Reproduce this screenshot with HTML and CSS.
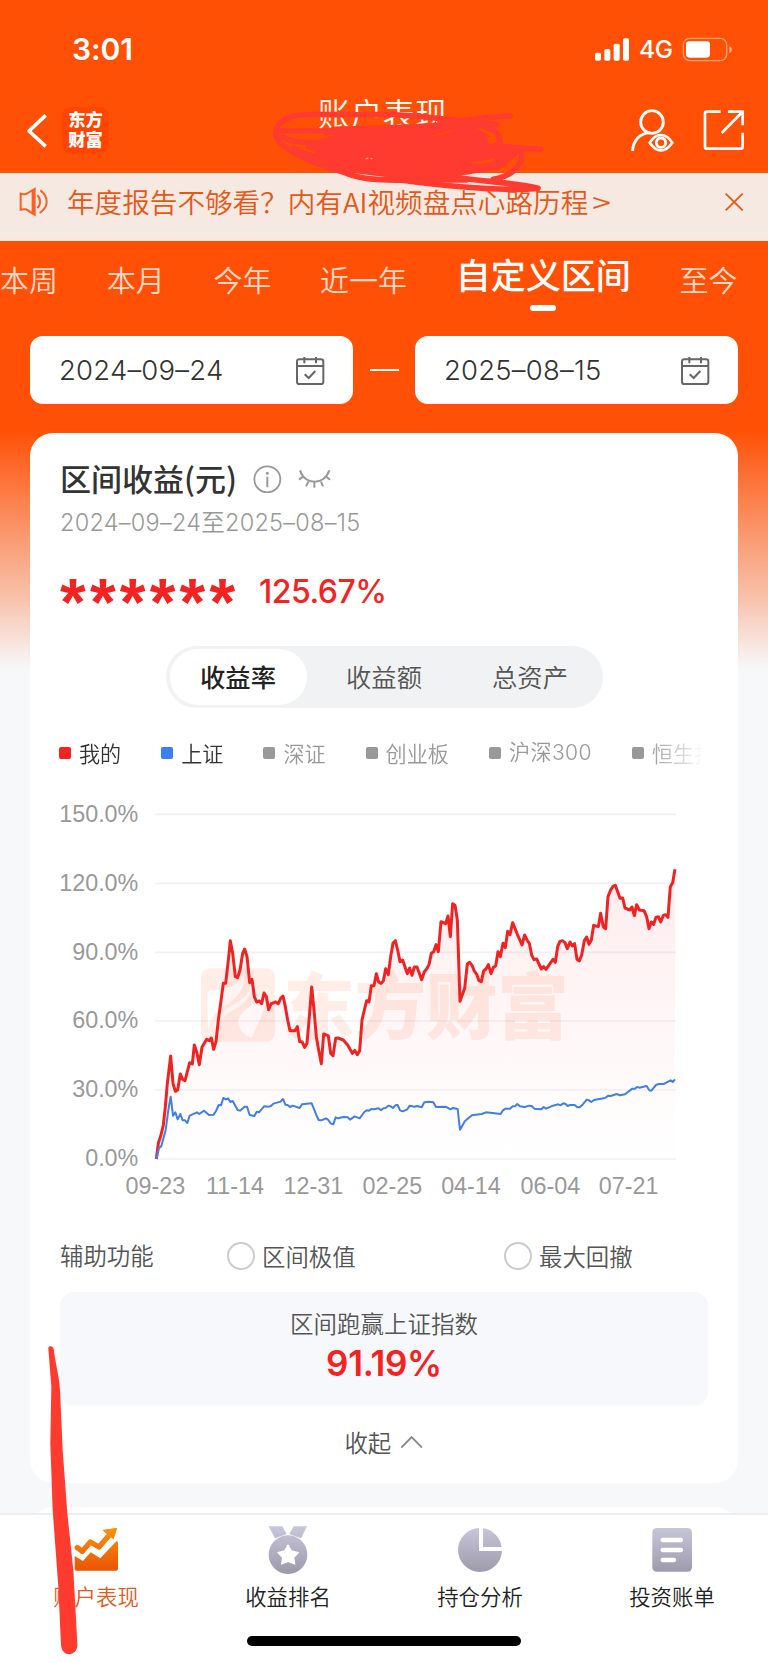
FILE: index.html
```
<!DOCTYPE html>
<html lang="zh-CN">
<head>
<meta charset="utf-8">
<title>账户表现</title>
<link rel="stylesheet" href="styles.css">
</head>
<body>
<div class="screen">
  <div class="status">
    <span class="time">3:01</span>
    <svg class="signal" viewBox="633 112 102 69"><g fill="#fff"><rect x="633" y="156" width="18" height="24" rx="5"/><rect x="661" y="145" width="18" height="35" rx="5"/><rect x="689" y="129" width="18" height="51" rx="5"/><rect x="717" y="113" width="18" height="67" rx="5"/></g></svg>
    <span class="net">4G</span>
    <svg class="battery" viewBox="894 109 150 75"><rect x="898" y="113" width="130" height="67" rx="19" fill="none" stroke="#fff" stroke-opacity=".45" stroke-width="4"/><rect x="906" y="122" width="72" height="49" rx="10" fill="#fff"/><path d="M1036 136Q1044 140 1044 147T1036 158Z" fill="#fff" fill-opacity=".5"/></svg>
  </div>
  <header class="nav">
    <svg class="back" viewBox="78 336 66 114"><path d="M137 346L87 393L137 439" fill="none" stroke="#fff" stroke-width="11" stroke-linejoin="round"/></svg>
    <div class="brand"><span>东方</span><span>财富</span></div>
    <h1 class="title">账户表现</h1>
    <svg class="user" viewBox="738 324 134 134"><g fill="none" stroke="#fff" stroke-width="8.5"><circle cx="804" cy="366" r="34"/><path d="M746 453C747 420 768 400 798 398"/><path d="M797 428Q812 405 831 405T865 428Q849 451 831 451T797 428Z" stroke-width="8"/><circle cx="831" cy="428" r="14"/></g></svg>
    <svg class="share" viewBox="957 327 126 126"><path d="M1010 335H969Q963 335 963 341V440Q963 446 969 446H1070Q1076 446 1076 440V398M1032 335H1076V376M1075 336L1013 399" fill="none" stroke="#fff" stroke-width="8"/></svg>
  </header>
  <div class="notice">
    <svg class="speaker" viewBox="57 561 90 90"><g fill="none" stroke="#f4622a" stroke-width="6"><path d="M62 581Q70 584 78 582L104 567V644L78 628Q70 627 62 629ZM98 572V640"/><path d="M112 586Q120 593 120 605T112 624M121 571Q140 585 140 605T119 639"/></g></svg>
    <p class="notice-text">年度报告不够看？内有AI视频盘点心路历程<span class="gt">&gt;</span></p>
    <svg class="close" viewBox="1021 576 60 60"><path d="M1026 581L1077 631M1077 581L1026 631" stroke="#e4581a" stroke-width="5.5"/></svg>
  </div>
  <nav class="ranges">
    <span>本周</span><span>本月</span><span>今年</span><span>近一年</span><span class="on">自定义区间</span><span>至今</span>
  </nav>
  <div class="dates">
    <div class="date"><span>2024–09–24</span><svg class="cal" viewBox="885 345 87 87"><g fill="none" stroke="#666" stroke-width="6"><rect x="888" y="355" width="79" height="74" rx="7"/><path d="M888 375H967M910 348V367M945 348V367"/><path d="M911 400L923 411L943 390"/></g></svg></div>
    <i class="to"></i>
    <div class="date"><span>2025–08–15</span><svg class="cal" viewBox="885 345 87 87"><g fill="none" stroke="#666" stroke-width="6"><rect x="888" y="355" width="79" height="74" rx="7"/><path d="M888 375H967M910 348V367M945 348V367"/><path d="M911 400L923 411L943 390"/></g></svg></div>
  </div>

  <section class="card">
    <div class="head">
      <h2>区间收益(元)</h2>
      <svg class="info" viewBox="759 15 86 86"><circle cx="802" cy="58" r="39" fill="none" stroke="#999" stroke-width="5.5"/><path d="M802 50V82" stroke="#999" stroke-width="6"/><circle cx="802" cy="40" r="4.5" fill="#999"/></svg>
      <svg class="eye" viewBox="894 28 99 60"><path d="M900 32C915 78 972 78 988 32M897 60L909 51M990 60L979 51M918 80L925 66M943 84V69M969 80L963 66" fill="none" stroke="#999" stroke-width="6"/></svg>
    </div>
    <p class="period">2024–09–24至2025–08–15</p>
    <div class="gain"><span class="stars">******</span><span class="pct">125.67%</span></div>
    <div class="seg"><span class="on">收益率</span><span>收益额</span><span>总资产</span></div>
    <div class="legend">
      <span class="mine">我的</span><span class="sh">上证</span><span>深证</span><span>创业板</span><span>沪深300</span><span>恒生指数</span>
    </div>
    <svg class="chart" viewBox="30 0 1944 1250">
      <defs><linearGradient id="area" x1="0" y1="238" x2="0" y2="1107" gradientUnits="userSpaceOnUse"><stop offset="0" stop-color="#f5222d" stop-opacity=".085"/><stop offset="1" stop-color="#f5222d" stop-opacity="0"/></linearGradient></defs>
      <path d="M315 73H1878M315 280H1878M315 487H1878M315 693H1878M315 900H1878M315 1107H1878" stroke="#f1f1f5" stroke-width="5"/>
      <g fill="#ff5a1e" fill-opacity=".11">
        <path fill-rule="evenodd" d="M483 535H645Q675 535 675 565V725Q675 755 645 755H483Q453 755 453 725V565Q453 535 483 535ZM472 615C472 603 480 602 492 601C530 599 560 590 580 556C588 600 555 628 515 654C488 672 478 700 474 722ZM606 562C612 610 590 640 545 662C515 680 502 705 497 728C484 690 510 668 540 650C580 628 605 610 606 562ZM655 588C652 650 625 700 604 744C580 735 560 712 565 690C575 655 630 640 655 588Z"/>
        <text class="mark" x="700" y="730">东方财富</text>
      </g>
      <path id="fill" fill="url(#area)"/>
      <path id="mine" class="line red"/>
      <path id="index" class="line blue"/>
      <g class="ylab"><text x="265" y="96">150.0%</text><text x="265" y="302">120.0%</text><text x="265" y="509">90.0%</text><text x="265" y="715">60.0%</text><text x="265" y="922">30.0%</text><text x="265" y="1129">0.0%</text></g>
      <g class="xlab"><text x="316" y="1212">09-23</text><text x="555" y="1212">11-14</text><text x="790" y="1212">12-31</text><text x="1027" y="1212">02-25</text><text x="1263" y="1212">04-14</text><text x="1501" y="1212">06-04</text><text x="1736" y="1212">07-21</text></g>
    </svg>
    <div class="aux"><span class="aux-name">辅助功能</span><span class="opt first">区间极值</span><span class="opt">最大回撤</span></div>
    <div class="beat"><span>区间跑赢上证指数</span><b>91.19%</b></div>
    <div class="fold">收起<svg class="up" viewBox="50 642 70 42"><path d="M54 680L85 648L116 680" fill="none" stroke="#888" stroke-width="5.5"/></svg></div>
  </section>
  <section class="next"></section>

  <footer class="tabbar">
    <svg class="defs" width="0" height="0"><defs>
      <linearGradient id="orbar" x1="0" y1="114" x2="0" y2="242" gradientUnits="userSpaceOnUse"><stop offset="0" stop-color="#fa920f"/><stop offset="1" stop-color="#ea5504"/></linearGradient>
      <linearGradient id="gr" x1="0" y1="108" x2="0" y2="248" gradientUnits="userSpaceOnUse"><stop offset="0" stop-color="#c9c7da"/><stop offset="1" stop-color="#9c9aab"/></linearGradient></defs></svg>
    <div class="tab on"><svg viewBox="216 105 144 150"><path d="M224 198L249 213L272 187L301 205L349 154Q354 152 354 158V236Q354 242 348 242H230Q224 242 224 236Z" fill="url(#orbar)"/><path d="M232 173L247 184L271 156L297 171L330 133" fill="none" stroke="url(#orbar)" stroke-width="16" stroke-linejoin="round" stroke-linecap="round"/><path d="M309 121L350 115L340 146Z" fill="url(#orbar)" stroke="url(#orbar)" stroke-width="3" stroke-linejoin="round"/></svg><span>账户表现</span></div>
    <div class="tab"><svg viewBox="795 105 144 150"><path d="M809 109H850L863 132L828 145ZM924 109H884L871 132L906 145Z" fill="url(#gr)"/><circle cx="867" cy="194" r="58" fill="url(#gr)"/><path d="M867 165L877 183L898 188L884 203L887 222L867 214L848 222L851 203L837 188L857 183Z" fill="#fff" stroke="#fff" stroke-width="4" stroke-linejoin="round"/></svg><span>收益排名</span></div>
    <div class="tab"><svg viewBox="216 105 144 150"><path d="M285 114A66 66 0 1 0 354 183H285Z" fill="url(#gr)"/><path d="M297 115A66 66 0 0 1 353 171H297Z" fill="url(#gr)"/></svg><span>持仓分析</span></div>
    <div class="tab"><svg viewBox="792 105 144 150"><rect x="805" y="114" width="119" height="131" rx="13" fill="url(#gr)"/><path d="M836 150H891M836 180H891M836 210H870" stroke="#fff" stroke-width="13" stroke-linecap="round"/></svg><span>投资账单</span></div>
    <i class="home"></i>
  </footer>

  <svg class="scribble" viewBox="0 0 2304 4989">
    <g fill="none" stroke="#ff3b30" stroke-linecap="round" stroke-linejoin="round" stroke-width="17">
      <path d="M1000 388L1152 384L1280 378Q1360 370 1420 388L1460 412L1480 436L1560 445L1520 480L1500 498L1400 516L1330 520L1400 540L1250 540L1152 522L1040 508L985 490L1000 478L945 470L960 452L925 440L960 432Z" fill="#ff3b30"/>
      <path d="M1490 374C1350 362 1250 340 1100 344C980 346 900 338 868 352C822 370 815 410 850 437C900 478 980 500 1040 520C1100 545 1180 540 1300 540"/>
      <path d="M838 393H1160M848 412C900 440 980 420 1060 420M880 445C920 470 990 478 1040 500"/>
      <path d="M1320 364C1400 368 1440 350 1530 348M1400 375C1480 375 1510 400 1495 440"/>
      <path d="M1400 440L1622 447"/>
      <path d="M1400 495C1480 510 1510 495 1525 475M1565 455C1570 500 1530 530 1480 538M1300 522C1420 545 1540 545 1614 565C1500 575 1350 560 1200 540"/>
    </g>
    <path d="M1290 408C1320 402 1345 393 1360 390C1335 404 1310 408 1290 408ZM1460 412C1475 408 1486 418 1484 430L1468 432ZM1400 488C1440 486 1470 480 1484 472C1490 486 1460 496 1400 488ZM955 408L1010 404L970 414Z" fill="#ff5005"/>
    <path d="M1097 477L1105 474M1112 476H1117" stroke="#ffb090" stroke-width="4"/>
    <path d="M145 4046C143 4036 160 4036 161 4046C168 4100 178 4130 180 4170L188 4350L202 4540L220 4710L232 4930C236 4970 186 4975 183 4935L175 4760L158 4530L151 4330L154 4160Z" fill="#ff3b30"/>
  </svg>
</div>
<script src="chart.js"></script>
</body>
</html>
```
FILE: styles.css
```
* { box-sizing: border-box; }
body { margin: 0; font-family: Inter, "Noto Sans CJK SC", sans-serif; color: #333; }
h1, h2, p { margin: 0; font-weight: 400; }
svg { display: block; flex: none; }
span { white-space: nowrap; }
.screen { position: relative; width: 768px; height: 1663px; overflow: hidden; display: flex; flex-direction: column; background: linear-gradient(#ff5005 0, #ff5005 430px, #fb8e60 520px, #f8c3ad 600px, #f7f3f3 662px, #f7f8fa 672px); }

.status { height: 98px; padding: 0 36px 0 72px; display: flex; align-items: center; color: #fff; flex: none; }
.time { font-size: 30px; font-weight: 600; margin-right: auto; letter-spacing: -.1px; }
.signal { width: 34px; height: 23px; margin-right: 10px; }
.net { font-size: 24.5px; font-weight: 500; width: 43px; letter-spacing: -.3px; }
.battery { width: 50px; height: 25px; }

.nav { height: 75px; padding: 0 23px 0 26px; display: flex; flex: none; color: #fff; }
.back { width: 22px; height: 38px; margin-top: 14px; }
.brand { width: 47px; height: 47px; margin: 9px 0 0 14px; border-radius: 9px; background: #ff4500; display: flex; flex-direction: column; align-items: center; padding-top: 2px; font: 900 17.3px/20px "Noto Sans CJK SC", sans-serif; }
.title { margin: -5px auto 0 209px; font: 350 32.3px/38px "Noto Sans CJK SC", sans-serif; }
.user { width: 44.67px; height: 44.67px; margin: 10px 28px 0 0; }
.share { width: 42px; height: 42px; margin-top: 11px; }

.notice { height: 68px; background: #f5e9e1; display: flex; flex: none; padding: 0 24px 0 19px; color: #e4581a; }
.speaker { width: 30px; height: 30px; margin-top: 14px; }
.notice-text { margin: 8px auto 0 18px; font-size: 27.6px; line-height: 40px; font-weight: 350; font-family: "Noto Sans CJK SC", sans-serif; white-space: nowrap; }
.gt { display: inline-block; transform: scaleX(1.25); margin-left: 6px; }
.close { width: 20px; height: 20px; margin-top: 19px; }

.ranges { height: 95px; flex: none; display: flex; gap: 48.7px; font: 350 29px/76px "Noto Sans CJK SC", sans-serif; color: rgba(255,255,255,.8); }
.ranges .on { color: #fff; font-size: 35px; font-weight: 500; line-height: 66px; display: flex; flex-direction: column; align-items: center; height: 70px; }
.ranges .on::after { content: ""; width: 26px; height: 6px; border-radius: 3px; background: #fff; margin-top: -2px; flex: none; }

.dates { display: flex; align-items: center; justify-content: space-between; padding: 0 30px; flex: none; }
.date { width: 323px; height: 68px; background: #fff; border-radius: 13px; display: flex; align-items: center; justify-content: space-between; padding: 0 28px 0 29px; font-size: 27.5px; font-weight: 350; letter-spacing: .2px; }
.cal { width: 29px; height: 29px; }
.to { width: 29px; height: 2px; background: #fff; }

.card { margin: 29px 30px 0; height: 1050px; flex: none; background: #fff; border-radius: 23px; padding: 25px 30px 0; display: flex; flex-direction: column; }
.head { display: flex; align-items: center; height: 42px; }
.head h2 { font: 500 31px/40px "Noto Sans CJK SC", sans-serif; width: 193px; white-space: nowrap; margin-top: -3px; }
.info { width: 28.67px; height: 28.67px; margin-right: 16px; }
.eye { width: 33px; height: 20px; }
.period { font-size: 23.5px; line-height: 34px; margin-top: 6px; color: #999; font-weight: 350; letter-spacing: .25px; }
.gain { display: flex; height: 60px; margin-top: 22px; color: #f52222; }
.stars { width: 199px; height: 60px; font: 700 66px/80px "Liberation Sans", Arial, sans-serif; letter-spacing: 4.2px; }
.pct { font-size: 32px; font-weight: 500; line-height: 60px; letter-spacing: -.5px; }
.seg { align-self: center; width: 437px; height: 62px; border-radius: 31px; background: #f1f2f4; padding: 3px 4px; display: flex; margin-top: 24px; }
.seg span { flex: none; width: 137px; margin-right: 9px; height: 56px; font: 350 25.3px/54px "Noto Sans CJK SC", sans-serif; text-align: center; color: #555; border-radius: 28px; }
.seg .on { background: #fff; color: #222; font-weight: 500; }
.seg span:last-child { margin-right: 0; }
.legend { height: 40px; width: 648px; margin: 25px 0 0 -1px; display: flex; gap: 40px; overflow: hidden; font: 350 21.1px/38px "Noto Sans CJK SC", sans-serif; color: #999; -webkit-mask-image: linear-gradient(90deg, #000 590px, transparent 645px); mask-image: linear-gradient(90deg, #000 590px, transparent 645px); }
.legend span { display: flex; align-items: center; gap: 8px; flex: none; }
.legend span:nth-child(5) { letter-spacing: .4px; font-family: Inter, "Noto Sans CJK SC", sans-serif; }
.legend span::before { content: ""; width: 12px; height: 12px; border-radius: 2px; background: #999; flex: none; }
.legend .mine, .legend .sh { color: #333; }
.legend .mine::before { background: #f52222; }
.legend .sh::before { background: #3a7ff2; }
.chart { width: 648px; height: 416.67px; margin-top: 17px; }
.line { fill: none; stroke-linejoin: round; }
.red { stroke: #f02222; stroke-width: 9; }
.blue { stroke: #4080e4; stroke-width: 6; }
.mark { font: 900 214px "Noto Sans CJK SC", sans-serif; }
.ylab, .xlab { font: 70px "Liberation Sans", Arial, sans-serif; fill: #999; }
.ylab { text-anchor: end; }
.xlab { text-anchor: middle; }
.aux { display: flex; height: 40px; margin-top: 29.33px; font: 350 23.4px/38px "Noto Sans CJK SC", sans-serif; color: #555; flex: none; }
.aux-name { width: 169px; }
.opt { display: flex; align-items: center; gap: 9px; }
.opt::before { content: ""; width: 24px; height: 24px; border: 2px solid #ccc; border-radius: 50%; flex: none; }
.opt.first { width: 277px; }
.aux .opt { position: relative; left: 0; margin-left: -2px; gap: 7px; margin-right: 2px; }
.beat { height: 114px; margin-top: 16px; border-radius: 14px; background: #f7f8fb; display: flex; flex-direction: column; align-items: center; padding-top: 13px; flex: none; font: 350 23.5px/36px "Noto Sans CJK SC", sans-serif; color: #555; }
.beat b { font: 600 35px/42px Inter, sans-serif; color: #f52222; letter-spacing: -.3px; margin-top: 1px; }
.fold { display: flex; justify-content: center; align-items: center; gap: 9px; height: 40px; margin-top: 16px; font: 350 23.4px/40px "Noto Sans CJK SC", sans-serif; color: #555; }
.up { width: 23.3px; height: 14px; }
.next { margin: 24px 30px 0; height: 30px; flex: none; background: #fff; border-radius: 23px 23px 0 0; }

.tabbar { height: 150px; margin-top: -24px; background: #fff; border-top: 2px solid #efefef; display: flex; flex-wrap: wrap; justify-content: center; align-content: flex-start; flex: none; }
.defs { position: absolute; }
.tab { width: 192px; height: 121px; display: flex; flex-direction: column; align-items: center; padding-top: 10px; font: 350 21.4px/32px "Noto Sans CJK SC", sans-serif; color: #222; }
.tab svg { width: 48px; height: 50px; margin-bottom: 5px; }
.tab.on { color: #e4581a; }
.home { width: 274px; height: 10px; border-radius: 5px; background: #000; }
.scribble { position: absolute; left: 0; top: 0; width: 768px; height: 1663px; pointer-events: none; }
```
FILE: chart.js
```
// Points are [x, y] pairs in chart units; the second half is offset by 960.
const shift = (s) => s.split(' ').map((p) => { const [x, y] = p.split(','); return (+x + 960) + ',' + y; }).join(' ');
const mine = '319,1107 325,1060 333,1035 340,1005 346,950 352,880 362,798 369,880 376,904 383,900 391,852 398,868 405,872 419,818 427,822 433,765 441,790 448,824 456,772 470,748 478,752 484,744 491,778 498,755 505,690 512,640 520,580 527,580 534,520 541,452 548,490 556,560 563,563 570,540 578,490 584,477 591,500 599,578 606,568 613,620 620,636 628,633 635,641 642,609 649,620 656,659 663,642 677,636 685,641 692,625 699,618 706,650 713,690 720,722 735,722 742,710 749,755 756,755 764,772 771,760 778,680 785,591 792,660 799,740 806,780 814,821 821,732 835,738 842,790 849,797 857,745 864,744 880,750 893,765 907,790 914,781 922,794 929,782 936,690 943,660 950,632 957,636 964,587 972,587 '
  + shift('19,551 26,576 33,580 40,573 47,536 55,554 62,500 69,460 76,452 83,480 90,515 98,510 112,551 119,534 126,556 133,531 141,531 155,569 163,545 170,537 177,524 184,490 191,485 198,464 205,485 213,395 227,401 234,378 241,440 248,341 255,346 262,390 270,634 284,595 292,522 299,517 306,526 313,543 320,553 327,572 334,575 341,543 348,537 355,524 363,551 370,532 377,528 384,485 391,500 399,460 406,473 413,424 420,434 428,398 435,415 442,433 456,465 464,435 471,450 478,460 485,495 492,509 500,507 514,537 521,530 528,538 542,518 549,508 556,517 563,470 570,454 577,452 585,458 592,476 600,456 607,468 614,461 621,508 628,513 635,495 643,452 650,441 657,463 664,450 671,406 685,410 692,370 700,411 707,416 714,320 722,300 729,289 736,286 743,305 750,325 758,324 765,354 779,360 786,351 793,377 800,344 808,360 822,362 830,380 837,416 844,396 851,403 858,382 865,380 872,396 880,376 887,374 894,382 901,290 908,278 915,238');
const index = '319,1107 327,1075 334,1068 347,1020 355,960 362,920 369,977 376,967 383,988 391,972 398,991 405,991 412,999 419,977 441,967 448,972 462,962 477,975 491,974 498,963 506,945 513,946 520,924 527,928 534,925 541,936 548,933 563,960 570,962 584,950 591,950 599,975 613,978 620,965 627,967 642,949 656,950 663,948 670,941 692,935 699,927 706,944 713,945 720,951 728,947 749,954 756,943 785,940 799,975 806,990 814,991 828,985 835,990 842,1000 850,1003 857,982 864,985 880,981 893,982 900,989 914,979 929,985 943,966 950,961 957,962 964,957 '
  + shift('11,958 26,955 33,961 40,955 47,954 55,947 62,949 69,954 76,946 83,945 90,961 98,964 112,958 119,947 133,950 141,948 155,952 163,937 177,935 190,937 198,951 227,950 241,958 249,954 263,957 270,1019 285,993 306,976 335,972 348,967 392,972 399,961 406,956 420,956 428,949 435,949 442,942 450,949 464,951 478,947 485,948 493,956 514,958 521,951 528,956 549,947 565,943 571,946 580,940 587,942 593,948 600,945 614,945 622,952 629,952 636,946 650,929 657,931 664,936 672,930 705,924 715,917 722,918 740,912 750,916 765,913 787,896 795,896 801,891 808,893 830,888 838,901 844,902 858,885 866,882 882,882 896,874 902,871 908,876 915,868');
document.getElementById('mine').setAttribute('d', 'M' + mine);
document.getElementById('index').setAttribute('d', 'M' + index);
document.getElementById('fill').setAttribute('d', 'M' + mine + ' 1875,1107Z');
```
